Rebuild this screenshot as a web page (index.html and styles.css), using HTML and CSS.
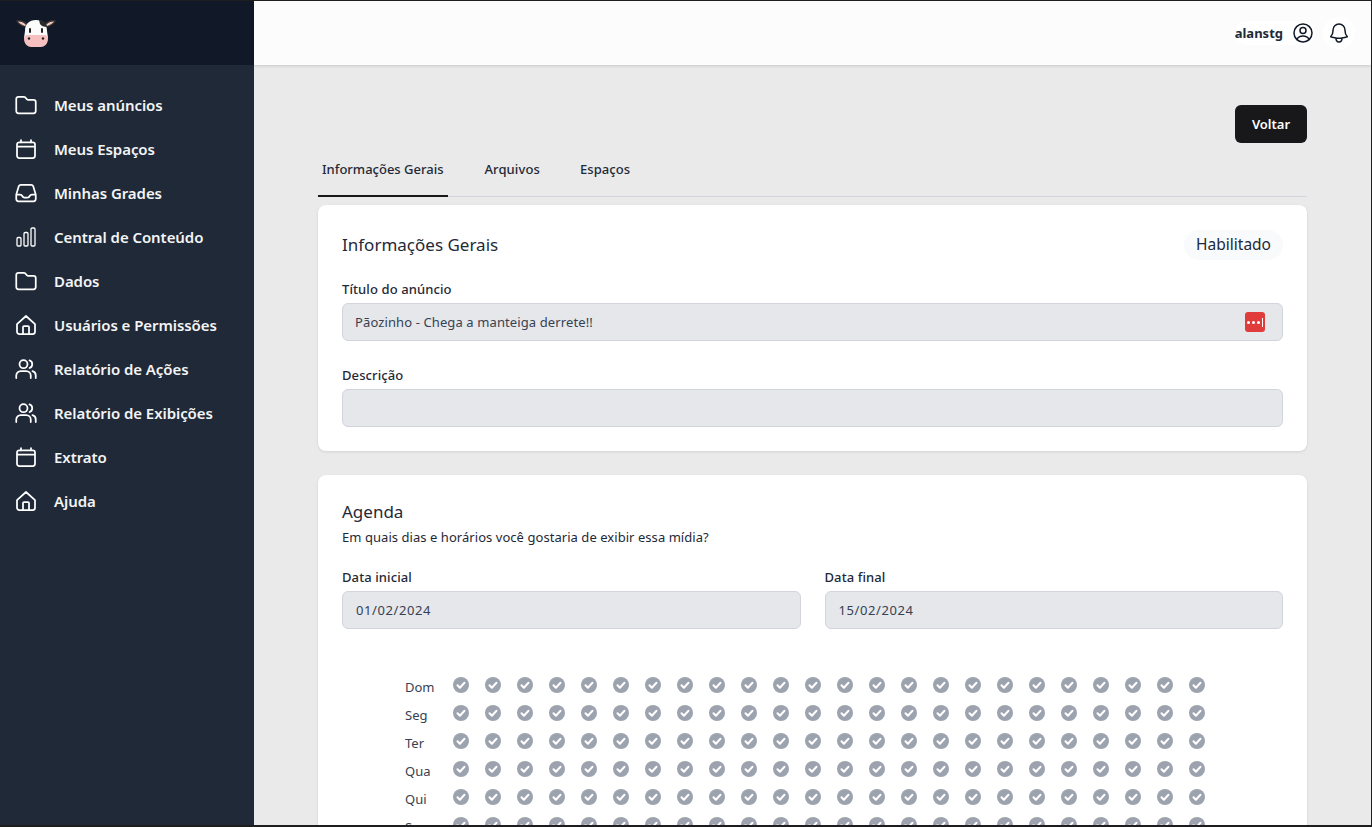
FILE: index.html
```html
<!DOCTYPE html>
<html lang="pt-BR">
<head>
<meta charset="utf-8">
<title>Anúncio</title>
<link rel="stylesheet" href="styles.css">
</head>
<body>
<svg class="defs" aria-hidden="true">
  <symbol id="i-folder" viewBox="0 0 24 24"><path d="M13.06 6.31l-2.12-2.12a1.5 1.5 0 00-1.061-.44H4.5A2.25 2.25 0 002.25 6v12a2.25 2.25 0 002.25 2.25h15A2.25 2.25 0 0021.75 18V9a2.25 2.25 0 00-2.25-2.25h-5.379a1.5 1.5 0 01-1.06-.44z"/></symbol>
  <symbol id="i-cal" viewBox="0 0 24 24"><path d="M7 3v2.5M17 3v2.5M3 9.500h18M5.250 5.250h13.500A2.250 2.250 0 0121 7.500v11.250A2.250 2.250 0 0118.750 21H5.250A2.250 2.250 0 013 18.750V7.500a2.250 2.250 0 012.250-2.250z"/></symbol>
  <symbol id="i-inbox" viewBox="0 0 24 24"><path d="M2.25 13.5h3.86a2.25 2.25 0 012.012 1.244l.256.512a2.25 2.25 0 002.013 1.244h3.218a2.25 2.25 0 002.013-1.244l.256-.512a2.25 2.25 0 012.013-1.244h3.859m-19.5.338V18a2.25 2.25 0 002.25 2.25h15A2.25 2.25 0 0021.75 18v-4.162c0-.224-.034-.447-.1-.661L19.24 5.338a2.25 2.25 0 00-2.15-1.588H6.911a2.25 2.25 0 00-2.15 1.588L2.35 13.177a2.25 2.25 0 00-.1.661z"/></symbol>
  <symbol id="i-chart" viewBox="0 0 24 24"><path class="thin" d="M3 13.625C3 13.004 3.504 12.5 4.125 12.5h1.75c.621 0 1.125.504 1.125 1.125v6.25C7 20.496 6.496 21 5.875 21h-1.75A1.125 1.125 0 013 19.875v-6.25zM10 8.625c0-.621.504-1.125 1.125-1.125h1.75c.621 0 1.125.504 1.125 1.125v11.25c0 .621-.504 1.125-1.125 1.125h-1.75A1.125 1.125 0 0110 19.875V8.625zM17 4.125C17 3.504 17.504 3 18.125 3h1.75C20.496 3 21 3.504 21 4.125v15.75c0 .621-.504 1.125-1.125 1.125h-1.75A1.125 1.125 0 0117 19.875V4.125z"/></symbol>
  <symbol id="i-home" viewBox="0 0 24 24"><path d="M3 11.2L12 3l9 8.2v7.55A2.25 2.25 0 0118.75 21H5.25A2.25 2.25 0 013 18.75V11.2zM9 21v-7a1 1 0 011-1h4a1 1 0 011 1v7"/></symbol>
  <symbol id="i-users" viewBox="0 0 24 24"><circle cx="9.5" cy="7.2" r="4"/><path d="M15.5 3.400a4 4 0 010 7.600M2.250 21v-2.500a4.500 4.500 0 014.500-4.500h5.500a4.500 4.500 0 014.500 4.500V21M18.500 14.200a4.300 4.300 0 013.250 4.200V21"/></symbol>
</svg>
<div class="app">
  <aside class="sidebar">
    <div class="brand">
      <svg class="cow" viewBox="0 0 40 32" aria-label="Logo">
        <path class="ear" d="M10 10C6 10 1 7 0 3.500c3.500-1.500 9 0 12 4z"/>
        <path class="ear-in" d="M9 9C6.500 8.500 3.500 6.500 2 4.500c3 0 6 1 8 3.500z"/>
        <path class="ear" d="M30 10c4 0 9-3 10-6.500-3.500-1.500-9 0-12 4z"/>
        <path class="ear-in" d="M31 9c2.500-.500 5.500-2.500 7-4.500-3 0-6 1-8 3.500z"/>
        <path class="head" d="M9 14c0-7 4-11 11-11s11 4 11 11l1 7H8z"/>
        <path class="patch" d="M23 3c5 0 7 3 8 7-3 0-6-1-7-3z"/>
        <rect class="eye" x="13" y="11" width="2" height="5" rx="1"/>
        <rect class="eye" x="25" y="11" width="2" height="5" rx="1"/>
        <path class="snout" d="M12 18h16c3 0 4 2 4 4 0 5-4 8-7 8H15c-3 0-7-3-7-8 0-2 1-4 4-4z"/>
        <circle class="eye" cx="13" cy="21.500" r="1.200"/>
        <circle class="eye" cx="27" cy="21.500" r="1.200"/>
      </svg>
    </div>
    <nav class="menu">
      <a class="item"><svg class="ico"><use href="#i-folder"/></svg>Meus anúncios</a>
      <a class="item"><svg class="ico"><use href="#i-cal"/></svg>Meus Espaços</a>
      <a class="item"><svg class="ico"><use href="#i-inbox"/></svg>Minhas Grades</a>
      <a class="item"><svg class="ico"><use href="#i-chart"/></svg>Central de Conteúdo</a>
      <a class="item"><svg class="ico"><use href="#i-folder"/></svg>Dados</a>
      <a class="item"><svg class="ico"><use href="#i-home"/></svg>Usuários e Permissões</a>
      <a class="item"><svg class="ico"><use href="#i-users"/></svg>Relatório de Ações</a>
      <a class="item"><svg class="ico"><use href="#i-users"/></svg>Relatório de Exibições</a>
      <a class="item"><svg class="ico"><use href="#i-cal"/></svg>Extrato</a>
      <a class="item"><svg class="ico"><use href="#i-home"/></svg>Ajuda</a>
    </nav>
  </aside>
  <div class="main">
    <header class="topbar">
      <div class="user">
        <span class="username">alanstg</span>
        <svg class="top-ico" viewBox="0 0 24 24"><path d="M15 9.500a3 3 0 11-6 0 3 3 0 016 0zM5.600 18.600a7.500 7.500 0 0112.800 0M21 12a9 9 0 11-18 0 9 9 0 0118 0z"/></svg>
      </div>
      <div class="bell">
        <svg class="top-ico" viewBox="0 0 24 24"><path d="M14.860 17.080a24 24 0 005.450-1.310A9 9 0 0118 9.750V9A6 6 0 006 9v.75a9 9 0 01-2.310 6.020 24 24 0 005.450 1.310m5.720 0a24.300 24.300 0 01-5.720 0m5.720 0a3 3 0 11-5.720 0"/></svg>
      </div>
    </header>
    <main class="content">
      <div class="actions"><button class="btn">Voltar</button></div>
      <div class="tabs">
        <a class="tab active">Informações Gerais</a>
        <a class="tab">Arquivos</a>
        <a class="tab">Espaços</a>
      </div>
      <section class="card info">
        <div class="card-head">
          <h2>Informações Gerais</h2>
          <span class="pill">Habilitado</span>
        </div>
        <label class="lbl">Título do anúncio</label>
        <div class="field field-title">
          <span>Pãozinho - Chega a manteiga derrete!!</span>
          <span class="pw"><i></i><i></i><i></i><b></b></span>
        </div>
        <label class="lbl lbl-desc">Descrição</label>
        <div class="field"></div>
      </section>
      <section class="card agenda">
        <h2>Agenda</h2>
        <p class="sub">Em quais dias e horários você gostaria de exibir essa mídia?</p>
        <div class="dates">
          <div><label class="lbl">Data inicial</label><div class="field date">01/02/2024</div></div>
          <div><label class="lbl">Data final</label><div class="field date">15/02/2024</div></div>
        </div>
        <div class="week">
          <div class="row"><span class="day">Dom</span><i class="c"></i><i class="c"></i><i class="c"></i><i class="c"></i><i class="c"></i><i class="c"></i><i class="c"></i><i class="c"></i><i class="c"></i><i class="c"></i><i class="c"></i><i class="c"></i><i class="c"></i><i class="c"></i><i class="c"></i><i class="c"></i><i class="c"></i><i class="c"></i><i class="c"></i><i class="c"></i><i class="c"></i><i class="c"></i><i class="c"></i><i class="c"></i></div>
          <div class="row"><span class="day">Seg</span><i class="c"></i><i class="c"></i><i class="c"></i><i class="c"></i><i class="c"></i><i class="c"></i><i class="c"></i><i class="c"></i><i class="c"></i><i class="c"></i><i class="c"></i><i class="c"></i><i class="c"></i><i class="c"></i><i class="c"></i><i class="c"></i><i class="c"></i><i class="c"></i><i class="c"></i><i class="c"></i><i class="c"></i><i class="c"></i><i class="c"></i><i class="c"></i></div>
          <div class="row"><span class="day">Ter</span><i class="c"></i><i class="c"></i><i class="c"></i><i class="c"></i><i class="c"></i><i class="c"></i><i class="c"></i><i class="c"></i><i class="c"></i><i class="c"></i><i class="c"></i><i class="c"></i><i class="c"></i><i class="c"></i><i class="c"></i><i class="c"></i><i class="c"></i><i class="c"></i><i class="c"></i><i class="c"></i><i class="c"></i><i class="c"></i><i class="c"></i><i class="c"></i></div>
          <div class="row"><span class="day">Qua</span><i class="c"></i><i class="c"></i><i class="c"></i><i class="c"></i><i class="c"></i><i class="c"></i><i class="c"></i><i class="c"></i><i class="c"></i><i class="c"></i><i class="c"></i><i class="c"></i><i class="c"></i><i class="c"></i><i class="c"></i><i class="c"></i><i class="c"></i><i class="c"></i><i class="c"></i><i class="c"></i><i class="c"></i><i class="c"></i><i class="c"></i><i class="c"></i></div>
          <div class="row"><span class="day">Qui</span><i class="c"></i><i class="c"></i><i class="c"></i><i class="c"></i><i class="c"></i><i class="c"></i><i class="c"></i><i class="c"></i><i class="c"></i><i class="c"></i><i class="c"></i><i class="c"></i><i class="c"></i><i class="c"></i><i class="c"></i><i class="c"></i><i class="c"></i><i class="c"></i><i class="c"></i><i class="c"></i><i class="c"></i><i class="c"></i><i class="c"></i><i class="c"></i></div>
          <div class="row"><span class="day">Sex</span><i class="c"></i><i class="c"></i><i class="c"></i><i class="c"></i><i class="c"></i><i class="c"></i><i class="c"></i><i class="c"></i><i class="c"></i><i class="c"></i><i class="c"></i><i class="c"></i><i class="c"></i><i class="c"></i><i class="c"></i><i class="c"></i><i class="c"></i><i class="c"></i><i class="c"></i><i class="c"></i><i class="c"></i><i class="c"></i><i class="c"></i><i class="c"></i></div>
        </div>
      </section>
    </main>
  </div>
</div>
</body>
</html>
```
FILE: styles.css
```css
* { box-sizing: border-box; }
html, body { margin: 0; height: 100%; overflow: hidden; }
body {
  background: #1e1e1e;
  font-family: "Noto Sans", sans-serif;
  color: #1f2937;
  padding: 1px 1px 2px 0;
}
.defs { display: none; }
.app { display: flex; height: 100%; overflow: hidden; }

.sidebar { flex: 0 0 254px; background: #1f2937; }
.brand { height: 64px; background: #111827; padding: 16px 0 0 16px; }
.cow { display: block; width: 40px; height: 32px; }
.ear { fill: #3a3230; }
.ear-in { fill: #f3c9c4; }
.head { fill: #fbfbfb; }
.patch { fill: #2a2a2e; }
.eye { fill: #222; }
.snout { fill: #f6bfc0; }

.menu { display: flex; flex-direction: column; padding-top: 18px; }
.item {
  display: flex;
  align-items: center;
  height: 44px;
  padding-left: 14px;
  gap: 16px;
  color: #f3f4f6;
  font-size: 15px;
  font-weight: 600;
  letter-spacing: -.07px;
}
.ico {
  width: 24px;
  height: 24px;
  flex: none;
  fill: none;
  stroke: #fff;
  stroke-width: 1.75;
  stroke-linecap: round;
  stroke-linejoin: round;
}
.thin { stroke-width: 1.3; }

.main { flex: 1; min-width: 0; display: flex; flex-direction: column; background: #eaeaea; }
.topbar {
  flex: 0 0 64px;
  display: flex;
  justify-content: flex-end;
  align-items: center;
  gap: 8px;
  padding-right: 16px;
  background: #fcfcfc;
  box-shadow: 0 1px 3px rgba(0,0,0,.15);
  position: relative;
}
.user {
  display: flex;
  align-items: center;
  gap: 8px;
  height: 24px;
  background: #fff;
  border-radius: 12px;
}
.username { font-size: 13px; font-weight: 700; color: #1f2937; }
.bell {
  width: 32px;
  height: 32px;
  border-radius: 50%;
  background: #fff;
  display: flex;
  align-items: center;
  justify-content: center;
}
.top-ico {
  width: 24px;
  height: 24px;
  fill: none;
  stroke: #111827;
  stroke-width: 1.5;
  stroke-linecap: round;
  stroke-linejoin: round;
}

.content { flex: 1; min-height: 0; overflow: hidden; padding: 40px 64px 0; }
.actions { display: flex; justify-content: flex-end; }
.btn {
  width: 72px;
  height: 38px;
  border: 0;
  border-radius: 6px;
  background: #18181b;
  color: #fff;
  font: 600 13px "Noto Sans", sans-serif;
}
.tabs {
  display: flex;
  gap: 8px;
  margin-top: 7px;
  height: 47px;
  border-bottom: 1px solid #d1d5db;
}
.tab {
  padding: 0 4px;
  margin-right: 24px;
  height: 47px;
  line-height: 38px;
  font-size: 13px;
  font-weight: 500;
  letter-spacing: .1px;
  color: #1f2937;
}
.tab.active { border-bottom: 2px solid #18181b; letter-spacing: 0; margin-right: 25px; }

.card {
  background: #fff;
  border-radius: 8px;
  padding: 24px;
  box-shadow: 0 1px 3px rgba(0,0,0,.1);
}
.info { margin-top: 8px; height: 246px; padding-top: 25px; }
.agenda { margin-top: 24px; height: 500px; padding-top: 23px; }
.card-head { display: flex; justify-content: space-between; align-items: center; height: 29px; }
h2 { margin: 0; font-size: 17px; font-weight: 400; color: #1f2937; line-height: 28px; }
.pill {
  padding: 0 12px;
  height: 30px;
  line-height: 29px;
  border-radius: 15px;
  background: #f9fafb;
  font-size: 15.5px;
  color: #1f2937;
}
.lbl { display: block; font-size: 13px; font-weight: 500; letter-spacing: .1px; line-height: 20px; color: #1f2937; }
.info .lbl { margin-top: 20px; }
.info .lbl-desc { margin-top: 24px; }
.field {
  height: 38px;
  margin-top: 4px;
  background: #e5e7eb;
  border: 1px solid #d1d5db;
  border-radius: 6px;
  padding: 0 12px;
  font-size: 13px;
  line-height: 36px;
  color: #374151;
}
.field-title { display: flex; align-items: center; justify-content: space-between; padding-right: 17px; letter-spacing: .11px; }
.pw {
  width: 20px;
  height: 20px;
  border-radius: 3px;
  background: #e03c3c;
  display: flex;
  align-items: center;
  justify-content: center;
  gap: 2px;
}
.pw i { width: 3px; height: 3px; border-radius: 50%; background: #fff; }
.pw b { width: 1px; height: 9px; background: #fff; }

.sub { margin: 1px 0 0; font-size: 13px; line-height: 20px; letter-spacing: .05px; color: #1f2937; }
.dates { display: grid; grid-template-columns: 1fr 1fr; gap: 24px; margin-top: 20px; }
.date { letter-spacing: .6px; padding-left: 13px; }
.week { margin-top: 46px; padding-left: 61px; }
.row { display: flex; align-items: flex-start; height: 28px; }
.day { width: 48px; font-size: 13px; line-height: 20px; padding: 2px 0 0 2px; color: #374151; }
.c {
  flex: 0 0 32px;
  height: 20px;
  background: no-repeat left center / 20px 20px url("data:image/svg+xml,%3Csvg xmlns='http://www.w3.org/2000/svg' viewBox='0 0 20 20'%3E%3Ccircle cx='10' cy='10' r='8' fill='%239ca3af'/%3E%3Cpath d='M6.500 10.300l2.400 2.400 4.600-5' fill='none' stroke='%23fff' stroke-width='2' stroke-linecap='round' stroke-linejoin='round'/%3E%3C/svg%3E");
}
```
